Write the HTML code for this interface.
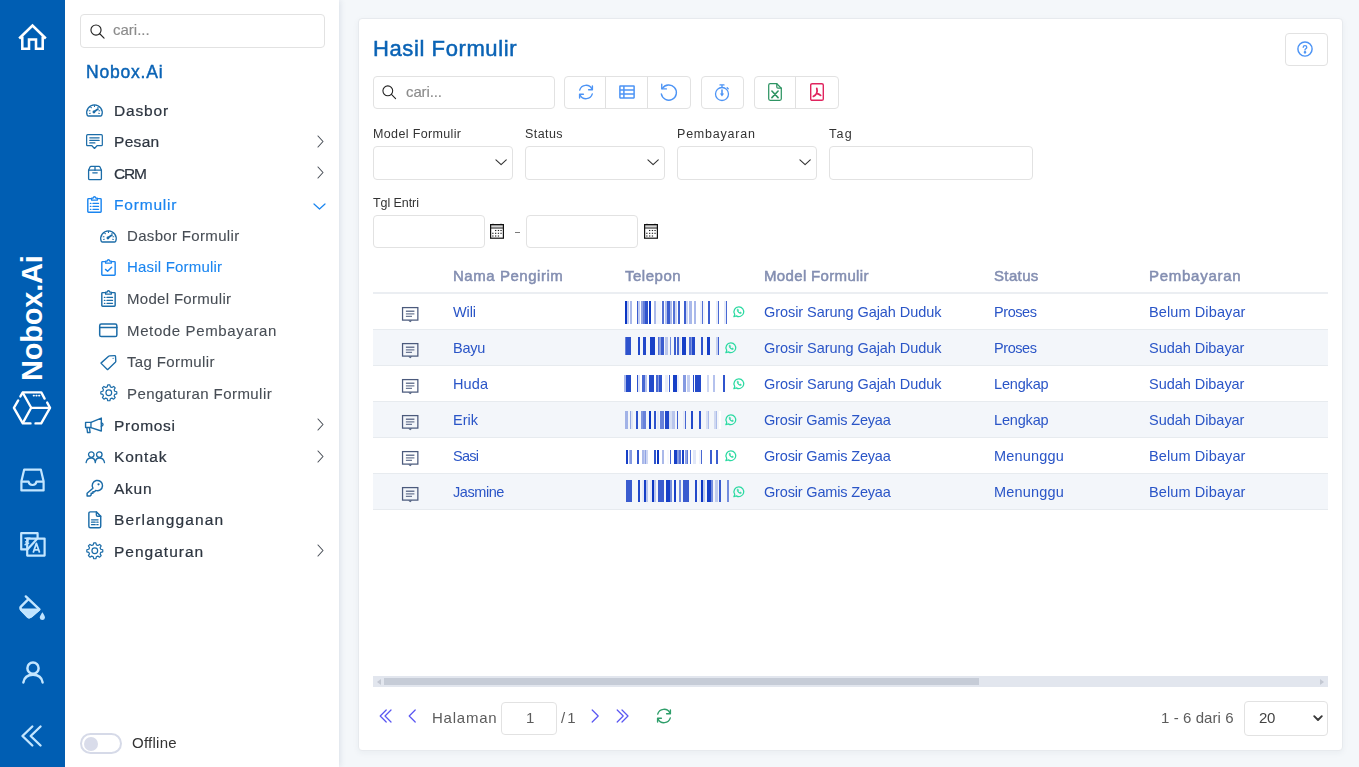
<!DOCTYPE html>
<html lang="id">
<head>
<meta charset="utf-8">
<title>Hasil Formulir - Nobox.Ai</title>
<style>
*{box-sizing:border-box;margin:0;padding:0}
html,body{width:1359px;height:767px;overflow:hidden}
body{font-family:"Liberation Sans",sans-serif;background:#f4f7fa;color:#333;position:relative;font-size:14px}
.abs{position:absolute}
svg{display:block;overflow:visible}
/* rail */
#rail{position:absolute;left:0;top:0;width:65px;height:767px;background:#005eb3}
#rail svg{position:absolute}
#brandv{position:absolute;left:0;top:0;width:0;height:0}
#brandv span{position:absolute;left:0;top:0;transform-origin:0 0;transform:translate(18px,381px) rotate(-90deg);white-space:nowrap;font-weight:bold;font-size:29px;color:#fff;line-height:1;letter-spacing:-.2px}
/* sidebar */
#side{position:absolute;left:65px;top:0;width:274px;height:767px;background:#fff;box-shadow:1px 0 6px rgba(60,80,110,.14)}
.sbox{position:absolute;left:15px;top:14px;width:245px;height:34px;border:1px solid #dcdcdc;border-radius:4px;background:#fff}
.ph{position:absolute;color:#8a8a8a;font-size:15px;line-height:1;white-space:nowrap}
#side .brand{position:absolute;left:21px;top:62px;font-size:18px;color:#0a63b5;line-height:20px;white-space:nowrap;letter-spacing:.2px}
.mi{position:absolute;left:0;width:274px;height:0}
.mi svg{position:absolute}
.mi .t{position:absolute;white-space:nowrap;line-height:20px;top:-10px;color:#2f3640}
.mi.l1 .t{left:48px;font-size:16px;letter-spacing:.35px}
.mi.l2 .t{left:62px;font-size:15px;color:#444a52;letter-spacing:.25px}
.mi.act .t{color:#1a85ee}
.chev{position:absolute;left:251px;top:-6px}
/* card */
#card{position:absolute;left:358px;top:18px;width:985px;height:733px;background:#fff;border:1px solid #e7eaee;border-radius:4px;box-shadow:0 2px 6px rgba(30,50,80,.05)}
#main .h1{position:absolute;left:373px;top:34px;font-size:22px;line-height:30px;color:#0a63b5;white-space:nowrap;letter-spacing:.15px}
.box{position:absolute;border:1px solid #e2e2e2;border-radius:4px;background:#fff}
.lbl{position:absolute;font-size:12.5px;line-height:16px;color:#333;white-space:nowrap;letter-spacing:.2px}
.box svg{position:absolute}
/* table */
.th{position:absolute;top:266px;font-size:15px;line-height:20px;color:#8792ad;font-weight:bold;white-space:nowrap}
.row{position:absolute;left:373px;width:955px;height:36px;border-bottom:1px solid #e2e6ec}
.row.alt{background:#f3f6fa}
.row span{position:absolute;top:8px;line-height:20px;font-size:15px;color:#2a52c4;white-space:nowrap}
.row svg{position:absolute}
.pg{position:absolute;font-size:15px;line-height:20px;color:#4a4a4a;white-space:nowrap}
.tx{position:absolute;white-space:nowrap;line-height:20px;will-change:transform}
</style>
</head>
<body>
<div id="rail">
<!-- home -->
<svg style="left:18px;top:23px" width="29" height="28" viewBox="0 0 29 28" fill="none" stroke="#fff" stroke-width="2.55" stroke-linejoin="miter"><path d="M1.2 15.5 L14.5 2.6 L27.8 15.5"/><path d="M4.3 13.5 V25.8 H11 V16.5 H18 V25.8 H24.7 V13.5"/></svg>
<div id="brandv"><span>Nobox.Ai</span></div>
<!-- cube logo -->
<svg style="left:12px;top:390px" width="40" height="36" viewBox="12 390 40 36" fill="none" stroke="#fff" stroke-width="2.35" stroke-linecap="round" stroke-linejoin="round"><path d="M18.2 400.4 L13.9 407.8 L22.8 423.4 H30.5"/><path d="M35.5 423.4 H41.2 L50 407.8 L47.2 402.6"/><path d="M44.6 398.6 L41.3 392.4 H22.8 L20.4 396.4"/><path d="M50 407.8 H31.2 L22.8 392.8"/><path d="M31.2 407.8 L23 422.6"/><path d="M33.6 395.6 H39.8" stroke-width="1.8" stroke-dasharray="0.4 2.3"/></svg>
<!-- inbox -->
<svg style="left:20px;top:468px" width="25" height="24" viewBox="0 0 25 24" fill="none" stroke="#c3e6ff" stroke-width="2.2" stroke-linejoin="round"><path d="M1.4 13.2 L4.2 1.6 H20.8 L23.6 13.2 V22.4 H1.4 Z"/><path d="M1.4 13.6 H8.6 C8.9 15.6 10.4 17 12.5 17 C14.6 17 16.1 15.6 16.4 13.6 H23.6"/></svg>
<!-- translate -->
<svg style="left:20px;top:532px" width="26" height="25" viewBox="0 0 26 25" fill="none" stroke="#c3e6ff" stroke-width="2.2" stroke-linejoin="round"><path d="M7.2 17.4 H1.2 V1.2 H17.6 V6.4"/><path d="M7.2 6.6 H24.6 V23.6 H7.2 Z" fill="#005eb3"/><path d="M7.4 17.4 L17.4 6.6" /><path d="M4.5 6.2 H10.5 M7.8 6.2 C8.4 9.6 7 12 4.6 13 M5 9.6 C6.5 10 8 10.6 9 11.6" stroke-width="1.5"/><path d="M13.2 20.6 L16.4 11.4 L19.6 20.6 M14.2 17.8 H18.6" stroke-width="1.7"/></svg>
<!-- bucket -->
<svg style="left:19.3px;top:595px" width="28" height="27" viewBox="0 0 28 27" fill="none" stroke="#c3e6ff" stroke-width="2.4" stroke-linejoin="round" stroke-linecap="round"><path d="M6.8 1.4 L20.4 14.4 L12.2 21.4 C11 22.4 9.6 22.4 8.6 21.4 L2 14.4 C1.2 13.4 1.2 12.4 2.2 11.4 L9.4 4.2"/><path d="M2 14.6 H20 L12.2 21.4 C11 22.4 9.6 22.4 8.6 21.4 Z" fill="#bfe3ff"/><path d="M23.4 17.2 C24.8 19.4 26 21 26 22.8 A2.7 2.7 0 0 1 20.700000000000003 22.8 C20.8 21 22 19.4 23.4 17.2 Z" fill="#bfe3ff" stroke="none"/></svg>
<!-- person -->
<svg style="left:21px;top:661px" width="24" height="23" viewBox="0 0 24 23" fill="none" stroke="#c3e6ff" stroke-width="2.5" stroke-linecap="round"><circle cx="12" cy="7.2" r="5.6"/><path d="M2.4 21.4 C3.2 16.6 7 13.8 12 13.8 C17 13.8 20.8 16.6 21.6 21.4"/></svg>
<!-- double chevron -->
<svg style="left:20.6px;top:725px" width="21" height="22" viewBox="0 0 23 24" fill="none" stroke="#c3e6ff" stroke-width="2.6" stroke-linecap="round" stroke-linejoin="round"><path d="M12.4 1.6 L1.6 12 L12.4 22.4"/><path d="M21.4 1.6 L10.6 12 L21.4 22.4"/></svg>
</div>
<div id="side"></div>
<div class="box" style="left:80px;top:14px;width:245px;height:34px"></div>
<svg class="abs" style="left:89.5px;top:23.5px" width="15" height="15" viewBox="0 0 16 16" fill="none" stroke-linecap="round" stroke-linejoin="round"><circle cx="6.4" cy="6.4" r="5.4" stroke="#222" stroke-width="1.2"/><path d="M10.4 10.4 L15 15" stroke="#222" stroke-width="1.2"/></svg>
<span class="tx " style="left:113.2px;top:20.1px;font-size:15px;color:#8b8b8b;letter-spacing:-0.01px;-webkit-text-stroke:0.15px;">cari...</span>
<span class="tx " style="left:86px;top:62.2px;font-size:17.5px;color:#0a63b5;letter-spacing:0.80px;-webkit-text-stroke:0.45px;">Nobox.Ai</span>
<svg class="abs" style="left:86.02px;top:101.92px" width="16.96" height="16.96" viewBox="0 0 16 16" fill="none" stroke-linecap="round" stroke-linejoin="round"><path d="M1.1 12.4 A7.3 7.3 0 1 1 14.9 12.4 Q14.7 13.2 13.8 13.2 H2.2 Q1.3 13.2 1.1 12.4 Z" stroke="#1b6ca8" stroke-width="1.3"/><path d="M8 3.4 V4.2 M4.5 4.8 L5 5.4 M11.5 4.8 L11.2 5.2 M3 8.2 H3.8 M13 8.2 H12.2 M3.4 10.8 L4 10.6 M12.6 10.8 L12 10.6" stroke="#1b6ca8" stroke-width="1.05"/><path d="M7.6 9.3 L11.3 6.7" stroke="#1b6ca8" stroke-width="1.7"/><circle cx="7.5" cy="9.4" r="1.35" fill="#1b6ca8"/></svg>
<span class="tx " style="left:113.6px;top:100.6px;font-size:15.5px;color:#2d3540;letter-spacing:0.85px;-webkit-text-stroke:0.22px;">Dasbor</span>
<svg class="abs" style="left:86.02px;top:133.42px" width="16.96" height="16.96" viewBox="0 0 16 16" fill="none" stroke-linecap="round" stroke-linejoin="round"><path d="M1.6 1.6 H14.4 Q15.4 1.6 15.4 2.6 V11 Q15.4 12 14.4 12 H10.4 L8 14.6 L5.6 12 H1.6 Q0.6 12 0.6 11 V2.6 Q0.6 1.6 1.6 1.6 Z" stroke="#1b6ca8" stroke-width="1.15"/><path d="M3.6 4.6 H12.4 M3.6 7 H12.4 M3.6 9.4 H8.4" stroke="#1b6ca8" stroke-width="1.2"/></svg>
<span class="tx " style="left:113.6px;top:132.1px;font-size:15.5px;color:#2d3540;letter-spacing:0.31px;-webkit-text-stroke:0.22px;">Pesan</span>
<svg class="abs" style="left:316.5px;top:134.9px" width="7" height="13" viewBox="0 0 7 13" fill="none" stroke-linecap="round" stroke-linejoin="round"><path d="M1 1 L6 6.5 L1 12" stroke="#4a5058" stroke-width="1.1"/></svg>
<svg class="abs" style="left:86.5px;top:165.4px" width="16" height="16" viewBox="0 0 16 16" fill="none" stroke-linecap="round" stroke-linejoin="round"><path d="M1.6 5.2 H14.4 V13.4 Q14.4 14.6 13.2 14.6 H2.8 Q1.6 14.6 1.6 13.4 Z" stroke="#1b6ca8" stroke-width="1.3"/><path d="M1.6 5.2 L3 2 Q3.3 1.4 4 1.4 H12 Q12.7 1.4 13 2 L14.4 5.2 M8 1.4 V5.2 M5.8 7.8 H10.2" stroke="#1b6ca8" stroke-width="1.3"/></svg>
<span class="tx " style="left:113.6px;top:163.6px;font-size:15.5px;color:#2d3540;letter-spacing:-1.16px;-webkit-text-stroke:0.22px;">CRM</span>
<svg class="abs" style="left:316.5px;top:166.4px" width="7" height="13" viewBox="0 0 7 13" fill="none" stroke-linecap="round" stroke-linejoin="round"><path d="M1 1 L6 6.5 L1 12" stroke="#4a5058" stroke-width="1.1"/></svg>
<svg class="abs" style="left:86.02px;top:195.92px" width="16.96" height="16.96" viewBox="0 0 16 16" fill="none" stroke-linecap="round" stroke-linejoin="round"><path d="M5.2 2.5 H2.4 Q1.7 2.5 1.7 3.2 V14.6 Q1.7 15.3 2.4 15.3 H13.6 Q14.3 15.3 14.3 14.6 V3.2 Q14.3 2.5 13.6 2.5 H10.8" stroke="#1a85f0" stroke-width="1.35"/><path d="M5.3 3.9 V2.1 H6.7 Q7 0.7 8 0.7 Q9 0.7 9.3 2.1 H10.7 V3.9 Z" stroke="#1a85f0" stroke-width="1.2"/><path d="M6.6 7 H11.8 M6.6 9.8 H11.8 M6.6 12.6 H11.8" stroke="#1a85f0" stroke-width="1.25"/><path d="M4.2 7 H4.6 M4.2 9.8 H4.6 M4.2 12.6 H4.6" stroke="#1a85f0" stroke-width="1.3"/></svg>
<span class="tx " style="left:113.6px;top:195.1px;font-size:15.5px;color:#1a85f0;letter-spacing:0.81px;-webkit-text-stroke:0.22px;">Formulir</span>
<svg class="abs" style="left:313px;top:202.6px" width="13" height="7" viewBox="0 0 13 7" fill="none" stroke-linecap="round" stroke-linejoin="round"><path d="M1 1 L6.5 6 L12 1" stroke="#1a85f0" stroke-width="1.2"/></svg>
<svg class="abs" style="left:99.92px;top:227.72px" width="16.96" height="16.96" viewBox="0 0 16 16" fill="none" stroke-linecap="round" stroke-linejoin="round"><path d="M1.1 12.4 A7.3 7.3 0 1 1 14.9 12.4 Q14.7 13.2 13.8 13.2 H2.2 Q1.3 13.2 1.1 12.4 Z" stroke="#1b6ca8" stroke-width="1.3"/><path d="M8 3.4 V4.2 M4.5 4.8 L5 5.4 M11.5 4.8 L11.2 5.2 M3 8.2 H3.8 M13 8.2 H12.2 M3.4 10.8 L4 10.6 M12.6 10.8 L12 10.6" stroke="#1b6ca8" stroke-width="1.05"/><path d="M7.6 9.3 L11.3 6.7" stroke="#1b6ca8" stroke-width="1.7"/><circle cx="7.5" cy="9.4" r="1.35" fill="#1b6ca8"/></svg>
<span class="tx " style="left:127.4px;top:226px;font-size:15px;color:#474d55;letter-spacing:0.33px;-webkit-text-stroke:0.1px;">Dasbor Formulir</span>
<svg class="abs" style="left:99.92px;top:258.82px" width="16.96" height="16.96" viewBox="0 0 16 16" fill="none" stroke-linecap="round" stroke-linejoin="round"><path d="M5.2 2.5 H2.4 Q1.7 2.5 1.7 3.2 V14.6 Q1.7 15.3 2.4 15.3 H13.6 Q14.3 15.3 14.3 14.6 V3.2 Q14.3 2.5 13.6 2.5 H10.8" stroke="#1a85f0" stroke-width="1.35"/><path d="M5.3 3.9 V2.1 H6.7 Q7 0.7 8 0.7 Q9 0.7 9.3 2.1 H10.7 V3.9 Z" stroke="#1a85f0" stroke-width="1.2"/><path d="M5.2 9.8 L7.2 11.6 L11 7.8" stroke="#1a85f0" stroke-width="1.35"/></svg>
<span class="tx " style="left:127.4px;top:256.7px;font-size:15px;color:#1a85f0;letter-spacing:0.19px;-webkit-text-stroke:0.1px;">Hasil Formulir</span>
<svg class="abs" style="left:99.92px;top:290.22px" width="16.96" height="16.96" viewBox="0 0 16 16" fill="none" stroke-linecap="round" stroke-linejoin="round"><path d="M5.2 2.5 H2.4 Q1.7 2.5 1.7 3.2 V14.6 Q1.7 15.3 2.4 15.3 H13.6 Q14.3 15.3 14.3 14.6 V3.2 Q14.3 2.5 13.6 2.5 H10.8" stroke="#1b6ca8" stroke-width="1.35"/><path d="M5.3 3.9 V2.1 H6.7 Q7 0.7 8 0.7 Q9 0.7 9.3 2.1 H10.7 V3.9 Z" stroke="#1b6ca8" stroke-width="1.2"/><path d="M6.6 7 H11.8 M6.6 9.8 H11.8 M6.6 12.6 H11.8" stroke="#1b6ca8" stroke-width="1.25"/><path d="M4.2 7 H4.6 M4.2 9.8 H4.6 M4.2 12.6 H4.6" stroke="#1b6ca8" stroke-width="1.3"/></svg>
<span class="tx " style="left:127.4px;top:289px;font-size:15px;color:#474d55;letter-spacing:0.31px;-webkit-text-stroke:0.1px;">Model Formulir</span>
<svg class="abs" style="left:99.12px;top:321.42px" width="18.56" height="18.56" viewBox="0 0 16 16" fill="none" stroke-linecap="round" stroke-linejoin="round"><rect x="0.6" y="2.6" width="14.8" height="10.8" rx="1.4" stroke="#1b6ca8" stroke-width="1.3"/><path d="M0.6 5.6 H15.4" stroke="#1b6ca8" stroke-width="1.3"/></svg>
<span class="tx " style="left:127.4px;top:320.5px;font-size:15px;color:#474d55;letter-spacing:0.63px;-webkit-text-stroke:0.1px;">Metode Pembayaran</span>
<svg class="abs" style="left:100px;top:353.8px" width="16.8" height="16.8" viewBox="0 0 16 16" fill="none" stroke-linecap="round" stroke-linejoin="round"><path d="M0.9 8.7 L8.2 2.2 Q8.6 1.9 9.2 1.85 L14 1.5 Q14.7 1.5 14.75 2.2 L15.05 6.8 Q15.05 7.4 14.6 7.9 L7.2 14.9 Z" stroke="#1b6ca8" stroke-width="1.3"/><circle cx="12.5" cy="4.1" r=".6" fill="#1b6ca8"/></svg>
<span class="tx " style="left:127.4px;top:352px;font-size:15px;color:#474d55;letter-spacing:0.37px;-webkit-text-stroke:0.1px;">Tag Formulir</span>
<svg class="abs" style="left:99.6px;top:384.4px" width="17.6" height="17.6" viewBox="0 0 16 16" fill="none" stroke-linecap="round" stroke-linejoin="round"><path d="M7.03 0.76 L8.97 0.76 L9.44 2.59 L10.81 3.16 L12.43 2.20 L13.80 3.57 L12.84 5.19 L13.41 6.56 L15.24 7.03 L15.24 8.97 L13.41 9.44 L12.84 10.81 L13.80 12.43 L12.43 13.80 L10.81 12.84 L9.44 13.41 L8.97 15.24 L7.03 15.24 L6.56 13.41 L5.19 12.84 L3.57 13.80 L2.20 12.43 L3.16 10.81 L2.59 9.44 L0.76 8.97 L0.76 7.03 L2.59 6.56 L3.16 5.19 L2.20 3.57 L3.57 2.20 L5.19 3.16 L6.56 2.59 Z" stroke="#1b6ca8" stroke-width="1.1" stroke-linejoin="round"/><circle cx="8" cy="8" r="2.6" stroke="#1b6ca8" stroke-width="1.1"/></svg>
<span class="tx " style="left:127.4px;top:383.5px;font-size:15px;color:#474d55;letter-spacing:0.44px;-webkit-text-stroke:0.1px;">Pengaturan Formulir</span>
<svg class="abs" style="left:85.86px;top:417.16px" width="17.28" height="17.28" viewBox="0 0 16 16" fill="none" stroke-linecap="round" stroke-linejoin="round"><path d="M-0.4 5 H4.6 L14.2 1 V13 L4.6 9.8 H-0.4 Z" stroke="#1b6ca8" stroke-width="1.3"/><path d="M4.6 5 V9.8 M0.8 9.8 L1.4 14.4 H3.8 L3.2 9.8 M14.2 5.4 Q15.8 5.8 15.8 7 Q15.8 8.2 14.2 8.6" stroke="#1b6ca8" stroke-width="1.25"/></svg>
<span class="tx " style="left:113.6px;top:415.6px;font-size:15.5px;color:#2d3540;letter-spacing:0.69px;-webkit-text-stroke:0.22px;">Promosi</span>
<svg class="abs" style="left:316.5px;top:418.4px" width="7" height="13" viewBox="0 0 7 13" fill="none" stroke-linecap="round" stroke-linejoin="round"><path d="M1 1 L6 6.5 L1 12" stroke="#4a5058" stroke-width="1.1"/></svg>
<svg class="abs" style="left:86.5px;top:451.1px" width="16" height="16" viewBox="0 0 16 16" fill="none" stroke-linecap="round" stroke-linejoin="round"><circle cx="4.3" cy="3.6" r="2.75" stroke="#1b6ca8" stroke-width="1.3"/><circle cx="12.3" cy="3.6" r="2.75" stroke="#1b6ca8" stroke-width="1.3"/><path d="M-0.9 11.6 Q-0.2 7 4.3 7 Q8 7 8.3 11.6 M8.3 11.6 Q8.6 7 12.3 7 Q16.8 7 17.5 11.6" stroke="#1b6ca8" stroke-width="1.3"/></svg>
<span class="tx " style="left:113.6px;top:447.1px;font-size:15.5px;color:#2d3540;letter-spacing:0.83px;-webkit-text-stroke:0.22px;">Kontak</span>
<svg class="abs" style="left:316.5px;top:449.9px" width="7" height="13" viewBox="0 0 7 13" fill="none" stroke-linecap="round" stroke-linejoin="round"><path d="M1 1 L6 6.5 L1 12" stroke="#4a5058" stroke-width="1.1"/></svg>
<svg class="abs" style="left:85.54px;top:479.44px" width="17.92" height="17.92" viewBox="0 0 16 16" fill="none" stroke-linecap="round" stroke-linejoin="round"><path d="M6.2 8.2 A4.6 4.6 0 1 1 8.6 10.2 L7.6 11.4 H6.2 V12.8 H4.6 V14.2 L3.6 15.2 H1 V12.8 Z" stroke="#1b6ca8" stroke-width="1.3"/><circle cx="11.2" cy="4.8" r="1" fill="#1b6ca8"/></svg>
<span class="tx " style="left:113.6px;top:478.6px;font-size:15.5px;color:#2d3540;letter-spacing:0.75px;-webkit-text-stroke:0.22px;">Akun</span>
<svg class="abs" style="left:85.7px;top:511.1px" width="17.6" height="17.6" viewBox="0 0 16 16" fill="none" stroke-linecap="round" stroke-linejoin="round"><path d="M9.4 0.8 H4 Q2.6 0.8 2.6 2.2 V13.8 Q2.6 15.2 4 15.2 H12 Q13.4 15.2 13.4 13.8 V4.8 Z" stroke="#1b6ca8" stroke-width="1.3"/><path d="M9.4 0.8 V3.6 Q9.4 4.8 10.6 4.8 H13.4" stroke="#1b6ca8" stroke-width="1.2"/><path d="M5 8 H11 M5 10.2 H8.4 M9.8 10.2 H11 M5 12.4 H8.4 M9.8 12.4 H11" stroke="#1b6ca8" stroke-width="1.1"/></svg>
<span class="tx " style="left:113.6px;top:510.1px;font-size:15.5px;color:#2d3540;letter-spacing:1.15px;-webkit-text-stroke:0.22px;">Berlangganan</span>
<svg class="abs" style="left:85.7px;top:542.1px" width="17.6" height="17.6" viewBox="0 0 16 16" fill="none" stroke-linecap="round" stroke-linejoin="round"><path d="M7.03 0.76 L8.97 0.76 L9.44 2.59 L10.81 3.16 L12.43 2.20 L13.80 3.57 L12.84 5.19 L13.41 6.56 L15.24 7.03 L15.24 8.97 L13.41 9.44 L12.84 10.81 L13.80 12.43 L12.43 13.80 L10.81 12.84 L9.44 13.41 L8.97 15.24 L7.03 15.24 L6.56 13.41 L5.19 12.84 L3.57 13.80 L2.20 12.43 L3.16 10.81 L2.59 9.44 L0.76 8.97 L0.76 7.03 L2.59 6.56 L3.16 5.19 L2.20 3.57 L3.57 2.20 L5.19 3.16 L6.56 2.59 Z" stroke="#1b6ca8" stroke-width="1.1" stroke-linejoin="round"/><circle cx="8" cy="8" r="2.6" stroke="#1b6ca8" stroke-width="1.1"/></svg>
<span class="tx " style="left:113.6px;top:541.6px;font-size:15.5px;color:#2d3540;letter-spacing:1.00px;-webkit-text-stroke:0.22px;">Pengaturan</span>
<svg class="abs" style="left:316.5px;top:544.4px" width="7" height="13" viewBox="0 0 7 13" fill="none" stroke-linecap="round" stroke-linejoin="round"><path d="M1 1 L6 6.5 L1 12" stroke="#4a5058" stroke-width="1.1"/></svg>
<div class="abs" style="left:80px;top:733px;width:42px;height:21px;border:2px solid #d6dae8;border-radius:11px;background:#fff"></div>
<div class="abs" style="left:84px;top:737px;width:14px;height:14px;border-radius:50%;background:#d9dcea"></div>
<span class="tx " style="left:132.4px;top:733.2px;font-size:15px;color:#333;letter-spacing:0.25px;">Offline</span>
<div id="main"><div id="card"></div>
<span class="tx " style="left:372.6px;top:38.5px;font-size:22px;color:#0a63b5;letter-spacing:0.60px;-webkit-text-stroke:0.5px;">Hasil Formulir</span>
<div class="box" style="left:1285px;top:33px;width:43px;height:33px"></div>
<svg class="abs" style="left:1297.4px;top:40.8px" width="16" height="16" viewBox="0 0 16 16" fill="none" stroke="#4d94f5" stroke-width="1.45" stroke-linecap="round"><circle cx="8" cy="8" r="7.1"/><path d="M6.2 6.3 Q6.2 4.7 8 4.7 Q9.8 4.7 9.8 6.2 Q9.8 7.2 8.8 7.7 Q8 8.2 8 9.1" stroke-width="1.3"/><circle cx="8" cy="11.3" r=".6" fill="#4d94f5"/></svg>
<div class="box" style="left:373px;top:76px;width:182px;height:33px"></div>
<svg class="abs" style="left:382px;top:84.5px" width="14.5" height="14.5" viewBox="0 0 16 16" fill="none" stroke-linecap="round" stroke-linejoin="round"><circle cx="6.4" cy="6.4" r="5.4" stroke="#222" stroke-width="1.2"/><path d="M10.4 10.4 L15 15" stroke="#222" stroke-width="1.2"/></svg>
<span class="tx " style="left:406px;top:82.3px;font-size:15px;color:#8b8b8b;letter-spacing:-0.11px;-webkit-text-stroke:0.15px;">cari...</span>
<div class="box" style="left:564px;top:76px;width:127px;height:33px"></div>
<div class="abs" style="left:605px;top:77px;width:1px;height:31px;background:#e0e0e0"></div>
<div class="abs" style="left:647px;top:77px;width:1px;height:31px;background:#e0e0e0"></div>
<div class="box" style="left:701px;top:76px;width:43px;height:33px"></div>
<div class="box" style="left:754px;top:76px;width:85px;height:33px"></div>
<div class="abs" style="left:795px;top:77px;width:1px;height:31px;background:#e0e0e0"></div>
<svg class="abs" style="left:577.5px;top:84.1px" width="16" height="16" viewBox="0 0 16 16" fill="none" stroke-linecap="round" stroke-linejoin="round"><path d="M1.7 6.1 A6.6 6.6 0 0 1 13.9 4.9" stroke="#4d94f5" stroke-width="1.4"/><path d="M14.4 1.9 V5.7 H10.6" stroke="#4d94f5" stroke-width="1.4"/><path d="M14.3 9.9 A6.6 6.6 0 0 1 2.1 11.1" stroke="#4d94f5" stroke-width="1.4"/><path d="M1.6 14.1 V10.3 H5.4" stroke="#4d94f5" stroke-width="1.4"/></svg>
<svg class="abs" style="left:619px;top:85.2px" width="16" height="13.8" viewBox="0 0 16 13.8" fill="none" stroke="#4d94f5" stroke-width="1.5"><rect x=".9" y=".9" width="14.2" height="12" rx=".3"/><path d="M.9 4.9 H15.1 M.9 8.9 H15.1 M4.9 .9 V12.9"/></svg>
<svg class="abs" style="left:659.4px;top:82.8px" width="19" height="19" viewBox="0 0 18 18" fill="none" stroke="#4d94f5" stroke-width="1.3" stroke-linecap="round" stroke-linejoin="round"><path d="M3.2 5.2 A7.2 7.2 0 1 1 2.2 10.4"/><path d="M2.6 1.2 V5.6 H7"/></svg>
<svg class="abs" style="left:714px;top:83.5px" width="16" height="17" viewBox="0 0 16 17" fill="none" stroke="#4d94f5" stroke-width="1.3" stroke-linecap="round"><circle cx="8" cy="10" r="6.5"/><path d="M6 .9 H10 M8 .9 V3.4 M13.2 3.8 L14.2 4.8"/><path d="M8 6 V10.4" stroke-width="1.6"/><path d="M5.9 9.6 L8 12.6 L10.1 9.6 Z" fill="#4d94f5" stroke="none"/></svg>
<svg class="abs" style="left:768px;top:83px" width="14" height="18" viewBox="0 0 14 18" fill="none" stroke="#2e9463" stroke-width="1.25" stroke-linejoin="round" stroke-linecap="round"><path d="M8.8 .7 H2.2 Q.7 .7 .7 2.2 V15.8 Q.7 17.3 2.2 17.3 H11.8 Q13.3 17.3 13.3 15.8 V5.2 Z"/><path d="M8.8 .7 V4 Q8.8 5.2 10 5.2 H13.3"/><path d="M3.9 8 L10.1 14.6 M10.1 8 L3.9 14.6" stroke-width="1.6"/></svg>
<svg class="abs" style="left:810px;top:83px" width="14" height="18" viewBox="0 0 14 18" fill="none" stroke="#e0245e" stroke-width="1.4" stroke-linejoin="round" stroke-linecap="round"><rect x=".7" y=".7" width="12.6" height="16.6" rx="1.4"/><path d="M6.8 5.4 Q7.6 8.2 6.6 10.4 Q5.4 12.6 3.4 13.4 M6.6 10.4 Q8.8 11 10.6 12.4" stroke-width="1.8"/></svg>
<span class="tx " style="left:372.6px;top:124.2px;font-size:12.5px;color:#333;letter-spacing:0.36px;">Model Formulir</span>
<span class="tx " style="left:524.6px;top:124.2px;font-size:12.5px;color:#333;letter-spacing:0.43px;">Status</span>
<span class="tx " style="left:676.6px;top:124.2px;font-size:12.5px;color:#333;letter-spacing:0.79px;">Pembayaran</span>
<span class="tx " style="left:828.6px;top:124.2px;font-size:12.5px;color:#333;letter-spacing:1.22px;">Tag</span>
<div class="box" style="left:373px;top:146px;width:140px;height:34px"></div>
<svg class="abs" style="left:494.7px;top:159px" width="12.2" height="6.6" viewBox="0 0 13 7" fill="none" stroke-linecap="round" stroke-linejoin="round"><path d="M1 1 L6.5 6 L12 1" stroke="#333" stroke-width="1.2"/></svg>
<div class="box" style="left:525px;top:146px;width:140px;height:34px"></div>
<svg class="abs" style="left:646.7px;top:159px" width="12.2" height="6.6" viewBox="0 0 13 7" fill="none" stroke-linecap="round" stroke-linejoin="round"><path d="M1 1 L6.5 6 L12 1" stroke="#333" stroke-width="1.2"/></svg>
<div class="box" style="left:677px;top:146px;width:140px;height:34px"></div>
<svg class="abs" style="left:798.7px;top:159px" width="12.2" height="6.6" viewBox="0 0 13 7" fill="none" stroke-linecap="round" stroke-linejoin="round"><path d="M1 1 L6.5 6 L12 1" stroke="#333" stroke-width="1.2"/></svg>
<div class="box" style="left:829px;top:146px;width:204px;height:34px"></div>
<span class="tx " style="left:372.6px;top:192.8px;font-size:12.5px;color:#333;letter-spacing:-0.07px;">Tgl Entri</span>
<div class="box" style="left:373px;top:215px;width:112px;height:33px"></div>
<div class="box" style="left:526px;top:215px;width:112px;height:33px"></div>
<svg class="abs" style="left:490px;top:223px" width="14" height="16" viewBox="0 0 14 16" fill="none"><rect x=".6" y="1.6" width="12.8" height="13.6" stroke="#111" stroke-width="1.2"/><path d="M.6 5 H13.4" stroke="#111" stroke-width="1"/><path d="M.6 2.9 H13.4" stroke="#111" stroke-width="1" stroke-opacity=".45"/><path d="M3 .7 V1.8 M11 .7 V1.8" stroke="#111" stroke-width="1.4" stroke-opacity=".7"/><rect x="5.0" y="6.95" width="1.3" height="1.1" fill="#222"/><rect x="7.8" y="6.95" width="1.3" height="1.1" fill="#222"/><rect x="10.4" y="6.95" width="1.3" height="1.1" fill="#222"/><rect x="2.2" y="9.75" width="1.3" height="1.1" fill="#222"/><rect x="5.0" y="9.75" width="1.3" height="1.1" fill="#222"/><rect x="7.8" y="9.75" width="1.3" height="1.1" fill="#222"/><rect x="10.4" y="9.75" width="1.3" height="1.1" fill="#222"/><rect x="2.2" y="12.45" width="1.3" height="1.1" fill="#222"/><rect x="5.0" y="12.45" width="1.3" height="1.1" fill="#222"/><rect x="7.8" y="12.45" width="1.3" height="1.1" fill="#222"/></svg>
<svg class="abs" style="left:643.8px;top:223px" width="14" height="16" viewBox="0 0 14 16" fill="none"><rect x=".6" y="1.6" width="12.8" height="13.6" stroke="#111" stroke-width="1.2"/><path d="M.6 5 H13.4" stroke="#111" stroke-width="1"/><path d="M.6 2.9 H13.4" stroke="#111" stroke-width="1" stroke-opacity=".45"/><path d="M3 .7 V1.8 M11 .7 V1.8" stroke="#111" stroke-width="1.4" stroke-opacity=".7"/><rect x="5.0" y="6.95" width="1.3" height="1.1" fill="#222"/><rect x="7.8" y="6.95" width="1.3" height="1.1" fill="#222"/><rect x="10.4" y="6.95" width="1.3" height="1.1" fill="#222"/><rect x="2.2" y="9.75" width="1.3" height="1.1" fill="#222"/><rect x="5.0" y="9.75" width="1.3" height="1.1" fill="#222"/><rect x="7.8" y="9.75" width="1.3" height="1.1" fill="#222"/><rect x="10.4" y="9.75" width="1.3" height="1.1" fill="#222"/><rect x="2.2" y="12.45" width="1.3" height="1.1" fill="#222"/><rect x="5.0" y="12.45" width="1.3" height="1.1" fill="#222"/><rect x="7.8" y="12.45" width="1.3" height="1.1" fill="#222"/></svg>
<div class="abs" style="left:514.7px;top:231.5px;width:5.8px;height:1.3px;background:#7a7a7a"></div>
<span class="tx " style="left:453px;top:266px;font-size:15px;color:#838eb1;letter-spacing:0.54px;-webkit-text-stroke:0.5px;">Nama Pengirim</span>
<span class="tx " style="left:625px;top:266px;font-size:15px;color:#838eb1;letter-spacing:0.51px;-webkit-text-stroke:0.5px;">Telepon</span>
<span class="tx " style="left:764px;top:266px;font-size:15px;color:#838eb1;letter-spacing:0.34px;-webkit-text-stroke:0.5px;">Model Formulir</span>
<span class="tx " style="left:994.4px;top:266px;font-size:15px;color:#838eb1;letter-spacing:0.37px;-webkit-text-stroke:0.5px;">Status</span>
<span class="tx " style="left:1148.8px;top:266px;font-size:15px;color:#838eb1;letter-spacing:0.73px;-webkit-text-stroke:0.5px;">Pembayaran</span>
<div class="abs" style="left:373px;top:291.8px;width:955px;height:2.2px;background:#ebeef2"></div>
<div class="abs" style="left:373px;top:294px;width:955px;height:36px;border-bottom:1px solid #e7ebef"></div>
<svg class="abs" style="left:401px;top:306px" width="18" height="17" viewBox="0 0 18 17" fill="none"><rect x="1.55" y="1.6" width="15.3" height="12.5" stroke="#4b5a7c" stroke-width="1.25"/><path d="M7.2 14.5 L9.2 16.3 L11.2 14.5 Z" fill="#4b5a7c"/><path d="M4.9 5.2 H13.4 M4.9 7.8 H13.4 M4.9 10.4 H11" stroke="#4b5a7c" stroke-width="1.35" stroke-opacity=".8"/></svg>
<span class="tx " style="left:452.8px;top:302.3px;font-size:14.5px;color:#2a55c7;letter-spacing:-0.12px;">Wili</span>
<span class="tx " style="left:764px;top:302.3px;font-size:14.5px;color:#2a55c7;letter-spacing:-0.06px;">Grosir Sarung Gajah Duduk</span>
<span class="tx " style="left:994.4px;top:302.3px;font-size:14.5px;color:#2a55c7;letter-spacing:-0.43px;">Proses</span>
<span class="tx " style="left:1148.8px;top:302.3px;font-size:14.5px;color:#2a55c7;letter-spacing:0.11px;">Belum Dibayar</span>
<svg class="abs" style="left:0;top:0" width="1359" height="767" viewBox="0 0 1359 767" shape-rendering="crispEdges"><rect x="624.97" y="301" width="2.20" height="23" fill="#0b36c4" fill-opacity="1"/><rect x="627.17" y="301" width="1.91" height="23" fill="#0b36c4" fill-opacity="0.25"/><rect x="630.04" y="301" width="2.10" height="23" fill="#0b36c4" fill-opacity="0.35"/><rect x="637.03" y="301" width="1.15" height="23" fill="#0b36c4" fill-opacity="0.8"/><rect x="638.18" y="301" width="1.72" height="23" fill="#0b36c4" fill-opacity="0.25"/><rect x="641.04" y="301" width="1.91" height="23" fill="#0b36c4" fill-opacity="0.45"/><rect x="642.96" y="301" width="2.10" height="23" fill="#0b36c4" fill-opacity="0.65"/><rect x="645.06" y="301" width="2.87" height="23" fill="#0b36c4" fill-opacity="0.85"/><rect x="648.98" y="301" width="2.30" height="23" fill="#0b36c4" fill-opacity="1"/><rect x="653.96" y="301" width="2.20" height="23" fill="#0b36c4" fill-opacity="0.35"/><rect x="656.16" y="301" width="4.97" height="23" fill="#0b36c4" fill-opacity="0.04"/><rect x="662.09" y="301" width="1.91" height="23" fill="#0b36c4" fill-opacity="0.7"/><rect x="664.96" y="301" width="1.91" height="23" fill="#0b36c4" fill-opacity="0.3"/><rect x="666.87" y="301" width="3.35" height="23" fill="#0b36c4" fill-opacity="0.8"/><rect x="670.22" y="301" width="1.91" height="23" fill="#0b36c4" fill-opacity="0.35"/><rect x="673.09" y="301" width="2.20" height="23" fill="#0b36c4" fill-opacity="0.7"/><rect x="675.29" y="301" width="2.10" height="23" fill="#0b36c4" fill-opacity="0.2"/><rect x="678.07" y="301" width="1.91" height="23" fill="#0b36c4" fill-opacity="0.8"/><rect x="683.90" y="301" width="2.30" height="23" fill="#0b36c4" fill-opacity="0.8"/><rect x="686.20" y="301" width="1.72" height="23" fill="#0b36c4" fill-opacity="0.2"/><rect x="689.07" y="301" width="2.87" height="23" fill="#0b36c4" fill-opacity="0.35"/><rect x="694.14" y="301" width="1.91" height="23" fill="#0b36c4" fill-opacity="0.35"/><rect x="700.16" y="301" width="1.63" height="23" fill="#0b36c4" fill-opacity="0.08"/><rect x="701.79" y="301" width="1.24" height="23" fill="#0b36c4" fill-opacity="0.7"/><rect x="703.03" y="301" width="1.63" height="23" fill="#0b36c4" fill-opacity="0.05"/><rect x="708.01" y="301" width="2.10" height="23" fill="#0b36c4" fill-opacity="0.8"/><rect x="716.14" y="301" width="1.63" height="23" fill="#0b36c4" fill-opacity="0.1"/><rect x="717.76" y="301" width="1.24" height="23" fill="#0b36c4" fill-opacity="0.75"/><rect x="724.08" y="301" width="1.91" height="23" fill="#0b36c4" fill-opacity="0.1"/><rect x="725.99" y="301" width="0.96" height="23" fill="#0b36c4" fill-opacity="0.75"/></svg>
<svg class="abs" style="left:733px;top:306.2px" width="11.6" height="11.6" viewBox="0 0 16 16" fill="none" stroke="#2cdaa2" stroke-linecap="round" stroke-linejoin="round"><path d="M8.2 1.2 A6.7 6.7 0 1 1 4.6 13.6 L1.2 14.8 L2.4 11.6 A6.7 6.7 0 0 1 8.2 1.2 Z" stroke-width="1.7"/><path d="M5.8 4.8 Q5.4 7 7.2 8.8 Q9 10.6 11.2 10.2 L11.4 9 L9.8 8.2 L9 9 Q7.6 8.4 7 7 L7.8 6.2 L7 4.6 Z" fill="#2cdaa2" stroke-width=".8"/></svg>
<div class="abs" style="left:373px;top:330px;width:955px;height:36px;background:#f3f6fa;border-bottom:1px solid #e7ebef"></div>
<svg class="abs" style="left:401px;top:342px" width="18" height="17" viewBox="0 0 18 17" fill="none"><rect x="1.55" y="1.6" width="15.3" height="12.5" stroke="#4b5a7c" stroke-width="1.25"/><path d="M7.2 14.5 L9.2 16.3 L11.2 14.5 Z" fill="#4b5a7c"/><path d="M4.9 5.2 H13.4 M4.9 7.8 H13.4 M4.9 10.4 H11" stroke="#4b5a7c" stroke-width="1.35" stroke-opacity=".8"/></svg>
<span class="tx " style="left:452.8px;top:338.3px;font-size:14.5px;color:#2a55c7;letter-spacing:-0.22px;">Bayu</span>
<span class="tx " style="left:764px;top:338.3px;font-size:14.5px;color:#2a55c7;letter-spacing:-0.06px;">Grosir Sarung Gajah Duduk</span>
<span class="tx " style="left:994.4px;top:338.3px;font-size:14.5px;color:#2a55c7;letter-spacing:-0.43px;">Proses</span>
<span class="tx " style="left:1148.8px;top:338.3px;font-size:14.5px;color:#2a55c7;letter-spacing:-0.04px;">Sudah Dibayar</span>
<svg class="abs" style="left:0;top:0" width="1359" height="767" viewBox="0 0 1359 767" shape-rendering="crispEdges"><rect x="625.26" y="337" width="0.96" height="18" fill="#0b36c4" fill-opacity="0.6"/><rect x="626.22" y="337" width="4.78" height="18" fill="#0b36c4" fill-opacity="0.85"/><rect x="637.70" y="337" width="2.39" height="18" fill="#0b36c4" fill-opacity="0.9"/><rect x="642.96" y="337" width="3.06" height="18" fill="#0b36c4" fill-opacity="0.9"/><rect x="649.94" y="337" width="4.97" height="18" fill="#0b36c4" fill-opacity="0.95"/><rect x="657.98" y="337" width="1.24" height="18" fill="#0b36c4" fill-opacity="0.7"/><rect x="659.22" y="337" width="1.72" height="18" fill="#0b36c4" fill-opacity="0.45"/><rect x="660.94" y="337" width="3.06" height="18" fill="#0b36c4" fill-opacity="0.8"/><rect x="665.15" y="337" width="2.87" height="18" fill="#0b36c4" fill-opacity="0.25"/><rect x="669.93" y="337" width="1.24" height="18" fill="#0b36c4" fill-opacity="0.55"/><rect x="673.86" y="337" width="2.10" height="18" fill="#0b36c4" fill-opacity="0.8"/><rect x="676.92" y="337" width="2.10" height="18" fill="#0b36c4" fill-opacity="0.75"/><rect x="679.02" y="337" width="2.20" height="18" fill="#0b36c4" fill-opacity="0.08"/><rect x="681.99" y="337" width="4.02" height="18" fill="#0b36c4" fill-opacity="0.95"/><rect x="688.87" y="337" width="2.10" height="18" fill="#0b36c4" fill-opacity="0.7"/><rect x="690.98" y="337" width="0.96" height="18" fill="#0b36c4" fill-opacity="0.5"/><rect x="691.94" y="337" width="2.97" height="18" fill="#0b36c4" fill-opacity="0.9"/><rect x="700.83" y="337" width="2.20" height="18" fill="#0b36c4" fill-opacity="0.85"/><rect x="706.86" y="337" width="3.06" height="18" fill="#0b36c4" fill-opacity="0.95"/><rect x="715.95" y="337" width="1.82" height="18" fill="#0b36c4" fill-opacity="0.2"/><rect x="717.76" y="337" width="1.24" height="18" fill="#0b36c4" fill-opacity="0.8"/></svg>
<svg class="abs" style="left:725px;top:342.2px" width="11.6" height="11.6" viewBox="0 0 16 16" fill="none" stroke="#2cdaa2" stroke-linecap="round" stroke-linejoin="round"><path d="M8.2 1.2 A6.7 6.7 0 1 1 4.6 13.6 L1.2 14.8 L2.4 11.6 A6.7 6.7 0 0 1 8.2 1.2 Z" stroke-width="1.7"/><path d="M5.8 4.8 Q5.4 7 7.2 8.8 Q9 10.6 11.2 10.2 L11.4 9 L9.8 8.2 L9 9 Q7.6 8.4 7 7 L7.8 6.2 L7 4.6 Z" fill="#2cdaa2" stroke-width=".8"/></svg>
<div class="abs" style="left:373px;top:366px;width:955px;height:36px;border-bottom:1px solid #e7ebef"></div>
<svg class="abs" style="left:401px;top:378px" width="18" height="17" viewBox="0 0 18 17" fill="none"><rect x="1.55" y="1.6" width="15.3" height="12.5" stroke="#4b5a7c" stroke-width="1.25"/><path d="M7.2 14.5 L9.2 16.3 L11.2 14.5 Z" fill="#4b5a7c"/><path d="M4.9 5.2 H13.4 M4.9 7.8 H13.4 M4.9 10.4 H11" stroke="#4b5a7c" stroke-width="1.35" stroke-opacity=".8"/></svg>
<span class="tx " style="left:452.8px;top:374.3px;font-size:14.5px;color:#2a55c7;letter-spacing:0.11px;">Huda</span>
<span class="tx " style="left:764px;top:374.3px;font-size:14.5px;color:#2a55c7;letter-spacing:-0.06px;">Grosir Sarung Gajah Duduk</span>
<span class="tx " style="left:994.4px;top:374.3px;font-size:14.5px;color:#2a55c7;letter-spacing:-0.17px;">Lengkap</span>
<span class="tx " style="left:1148.8px;top:374.3px;font-size:14.5px;color:#2a55c7;letter-spacing:-0.04px;">Sudah Dibayar</span>
<svg class="abs" style="left:0;top:0" width="1359" height="767" viewBox="0 0 1359 767" shape-rendering="crispEdges"><rect x="624.02" y="375" width="1.91" height="17" fill="#0b36c4" fill-opacity="0.35"/><rect x="625.93" y="375" width="4.88" height="17" fill="#0b36c4" fill-opacity="0.9"/><rect x="637.03" y="375" width="1.15" height="17" fill="#0b36c4" fill-opacity="0.85"/><rect x="638.18" y="375" width="1.72" height="17" fill="#0b36c4" fill-opacity="0.12"/><rect x="642.00" y="375" width="3.06" height="17" fill="#0b36c4" fill-opacity="0.75"/><rect x="645.06" y="375" width="1.91" height="17" fill="#0b36c4" fill-opacity="0.3"/><rect x="648.98" y="375" width="4.97" height="17" fill="#0b36c4" fill-opacity="0.9"/><rect x="656.06" y="375" width="1.91" height="17" fill="#0b36c4" fill-opacity="0.75"/><rect x="657.98" y="375" width="0.96" height="17" fill="#0b36c4" fill-opacity="0.5"/><rect x="658.93" y="375" width="3.16" height="17" fill="#0b36c4" fill-opacity="0.85"/><rect x="664.96" y="375" width="3.06" height="17" fill="#0b36c4" fill-opacity="0.1"/><rect x="668.98" y="375" width="1.05" height="17" fill="#0b36c4" fill-opacity="0.8"/><rect x="672.90" y="375" width="4.02" height="17" fill="#0b36c4" fill-opacity="0.95"/><rect x="676.92" y="375" width="1.91" height="17" fill="#0b36c4" fill-opacity="0.08"/><rect x="682.94" y="375" width="3.06" height="17" fill="#0b36c4" fill-opacity="0.5"/><rect x="686.96" y="375" width="3.06" height="17" fill="#0b36c4" fill-opacity="0.25"/><rect x="692.89" y="375" width="1.05" height="17" fill="#0b36c4" fill-opacity="0.9"/><rect x="694.90" y="375" width="5.93" height="17" fill="#0b36c4" fill-opacity="0.9"/><rect x="706.86" y="375" width="2.10" height="17" fill="#0b36c4" fill-opacity="0.2"/><rect x="712.98" y="375" width="2.01" height="17" fill="#0b36c4" fill-opacity="0.3"/><rect x="722.83" y="375" width="2.10" height="17" fill="#0b36c4" fill-opacity="0.85"/></svg>
<svg class="abs" style="left:733px;top:378.2px" width="11.6" height="11.6" viewBox="0 0 16 16" fill="none" stroke="#2cdaa2" stroke-linecap="round" stroke-linejoin="round"><path d="M8.2 1.2 A6.7 6.7 0 1 1 4.6 13.6 L1.2 14.8 L2.4 11.6 A6.7 6.7 0 0 1 8.2 1.2 Z" stroke-width="1.7"/><path d="M5.8 4.8 Q5.4 7 7.2 8.8 Q9 10.6 11.2 10.2 L11.4 9 L9.8 8.2 L9 9 Q7.6 8.4 7 7 L7.8 6.2 L7 4.6 Z" fill="#2cdaa2" stroke-width=".8"/></svg>
<div class="abs" style="left:373px;top:402px;width:955px;height:36px;background:#f3f6fa;border-bottom:1px solid #e7ebef"></div>
<svg class="abs" style="left:401px;top:414px" width="18" height="17" viewBox="0 0 18 17" fill="none"><rect x="1.55" y="1.6" width="15.3" height="12.5" stroke="#4b5a7c" stroke-width="1.25"/><path d="M7.2 14.5 L9.2 16.3 L11.2 14.5 Z" fill="#4b5a7c"/><path d="M4.9 5.2 H13.4 M4.9 7.8 H13.4 M4.9 10.4 H11" stroke="#4b5a7c" stroke-width="1.35" stroke-opacity=".8"/></svg>
<span class="tx " style="left:452.8px;top:410.3px;font-size:14.5px;color:#2a55c7;letter-spacing:0.01px;">Erik</span>
<span class="tx " style="left:764px;top:410.3px;font-size:14.5px;color:#2a55c7;letter-spacing:-0.17px;">Grosir Gamis Zeyaa</span>
<span class="tx " style="left:994.4px;top:410.3px;font-size:14.5px;color:#2a55c7;letter-spacing:-0.17px;">Lengkap</span>
<span class="tx " style="left:1148.8px;top:410.3px;font-size:14.5px;color:#2a55c7;letter-spacing:-0.04px;">Sudah Dibayar</span>
<svg class="abs" style="left:0;top:0" width="1359" height="767" viewBox="0 0 1359 767" shape-rendering="crispEdges"><rect x="624.97" y="411" width="2.97" height="18" fill="#0b36c4" fill-opacity="0.35"/><rect x="630.04" y="411" width="0.96" height="18" fill="#0b36c4" fill-opacity="0.4"/><rect x="631.00" y="411" width="1.91" height="18" fill="#0b36c4" fill-opacity="0.08"/><rect x="635.98" y="411" width="2.20" height="18" fill="#0b36c4" fill-opacity="0.85"/><rect x="641.04" y="411" width="1.91" height="18" fill="#0b36c4" fill-opacity="0.5"/><rect x="642.96" y="411" width="3.06" height="18" fill="#0b36c4" fill-opacity="0.6"/><rect x="648.98" y="411" width="1.91" height="18" fill="#0b36c4" fill-opacity="1"/><rect x="653.96" y="411" width="2.01" height="18" fill="#0b36c4" fill-opacity="0.85"/><rect x="656.83" y="411" width="1.91" height="18" fill="#0b36c4" fill-opacity="0.06"/><rect x="659.99" y="411" width="4.02" height="18" fill="#0b36c4" fill-opacity="0.6"/><rect x="664.96" y="411" width="4.30" height="18" fill="#0b36c4" fill-opacity="0.9"/><rect x="669.26" y="411" width="2.87" height="18" fill="#0b36c4" fill-opacity="0.12"/><rect x="672.13" y="411" width="2.87" height="18" fill="#0b36c4" fill-opacity="0.25"/><rect x="676.92" y="411" width="1.15" height="18" fill="#0b36c4" fill-opacity="0.8"/><rect x="682.94" y="411" width="1.91" height="18" fill="#0b36c4" fill-opacity="0.06"/><rect x="684.86" y="411" width="1.15" height="18" fill="#0b36c4" fill-opacity="0.75"/><rect x="690.98" y="411" width="2.01" height="18" fill="#0b36c4" fill-opacity="0.9"/><rect x="698.92" y="411" width="2.10" height="18" fill="#0b36c4" fill-opacity="0.85"/><rect x="706.09" y="411" width="1.91" height="18" fill="#0b36c4" fill-opacity="0.12"/><rect x="708.01" y="411" width="0.96" height="18" fill="#0b36c4" fill-opacity="0.3"/><rect x="714.03" y="411" width="2.10" height="18" fill="#0b36c4" fill-opacity="0.15"/><rect x="716.14" y="411" width="0.96" height="18" fill="#0b36c4" fill-opacity="0.3"/><rect x="719.01" y="411" width="1.91" height="18" fill="#fff" fill-opacity="1"/></svg>
<svg class="abs" style="left:725px;top:414.2px" width="11.6" height="11.6" viewBox="0 0 16 16" fill="none" stroke="#2cdaa2" stroke-linecap="round" stroke-linejoin="round"><path d="M8.2 1.2 A6.7 6.7 0 1 1 4.6 13.6 L1.2 14.8 L2.4 11.6 A6.7 6.7 0 0 1 8.2 1.2 Z" stroke-width="1.7"/><path d="M5.8 4.8 Q5.4 7 7.2 8.8 Q9 10.6 11.2 10.2 L11.4 9 L9.8 8.2 L9 9 Q7.6 8.4 7 7 L7.8 6.2 L7 4.6 Z" fill="#2cdaa2" stroke-width=".8"/></svg>
<div class="abs" style="left:373px;top:438px;width:955px;height:36px;border-bottom:1px solid #e7ebef"></div>
<svg class="abs" style="left:401px;top:450px" width="18" height="17" viewBox="0 0 18 17" fill="none"><rect x="1.55" y="1.6" width="15.3" height="12.5" stroke="#4b5a7c" stroke-width="1.25"/><path d="M7.2 14.5 L9.2 16.3 L11.2 14.5 Z" fill="#4b5a7c"/><path d="M4.9 5.2 H13.4 M4.9 7.8 H13.4 M4.9 10.4 H11" stroke="#4b5a7c" stroke-width="1.35" stroke-opacity=".8"/></svg>
<span class="tx " style="left:452.8px;top:446.3px;font-size:14.5px;color:#2a55c7;letter-spacing:-0.74px;">Sasi</span>
<span class="tx " style="left:764px;top:446.3px;font-size:14.5px;color:#2a55c7;letter-spacing:-0.17px;">Grosir Gamis Zeyaa</span>
<span class="tx " style="left:994.4px;top:446.3px;font-size:14.5px;color:#2a55c7;letter-spacing:0.18px;">Menunggu</span>
<span class="tx " style="left:1148.8px;top:446.3px;font-size:14.5px;color:#2a55c7;letter-spacing:0.11px;">Belum Dibayar</span>
<svg class="abs" style="left:0;top:0" width="1359" height="767" viewBox="0 0 1359 767" shape-rendering="crispEdges"><rect x="625.93" y="450" width="2.01" height="14" fill="#0b36c4" fill-opacity="0.95"/><rect x="629.09" y="450" width="1.24" height="14" fill="#0b36c4" fill-opacity="0.35"/><rect x="630.33" y="450" width="1.63" height="14" fill="#0b36c4" fill-opacity="0.5"/><rect x="637.03" y="450" width="1.91" height="14" fill="#0b36c4" fill-opacity="0.85"/><rect x="642.00" y="450" width="1.91" height="14" fill="#0b36c4" fill-opacity="0.35"/><rect x="643.91" y="450" width="0.96" height="14" fill="#0b36c4" fill-opacity="0.25"/><rect x="644.87" y="450" width="1.15" height="14" fill="#0b36c4" fill-opacity="0.45"/><rect x="646.02" y="450" width="1.91" height="14" fill="#0b36c4" fill-opacity="0.2"/><rect x="653.96" y="450" width="2.01" height="14" fill="#0b36c4" fill-opacity="0.85"/><rect x="657.02" y="450" width="2.20" height="14" fill="#0b36c4" fill-opacity="1"/><rect x="662.09" y="450" width="1.91" height="14" fill="#0b36c4" fill-opacity="0.35"/><rect x="666.87" y="450" width="2.10" height="14" fill="#0b36c4" fill-opacity="0.03"/><rect x="669.93" y="450" width="1.05" height="14" fill="#0b36c4" fill-opacity="0.75"/><rect x="674.05" y="450" width="3.06" height="14" fill="#0b36c4" fill-opacity="0.95"/><rect x="677.11" y="450" width="1.91" height="14" fill="#0b36c4" fill-opacity="0.5"/><rect x="679.02" y="450" width="1.91" height="14" fill="#0b36c4" fill-opacity="0.7"/><rect x="681.99" y="450" width="1.91" height="14" fill="#0b36c4" fill-opacity="0.95"/><rect x="685.05" y="450" width="1.91" height="14" fill="#0b36c4" fill-opacity="0.45"/><rect x="686.96" y="450" width="0.96" height="14" fill="#0b36c4" fill-opacity="0.65"/><rect x="690.02" y="450" width="0.96" height="14" fill="#0b36c4" fill-opacity="0.7"/><rect x="692.99" y="450" width="3.06" height="14" fill="#0b36c4" fill-opacity="0.12"/><rect x="698.92" y="450" width="1.91" height="14" fill="#0b36c4" fill-opacity="0.06"/><rect x="701.02" y="450" width="0.96" height="14" fill="#0b36c4" fill-opacity="0.75"/><rect x="709.92" y="450" width="2.10" height="14" fill="#0b36c4" fill-opacity="0.8"/><rect x="715.95" y="450" width="2.10" height="14" fill="#0b36c4" fill-opacity="0.8"/></svg>
<svg class="abs" style="left:725px;top:450.2px" width="11.6" height="11.6" viewBox="0 0 16 16" fill="none" stroke="#2cdaa2" stroke-linecap="round" stroke-linejoin="round"><path d="M8.2 1.2 A6.7 6.7 0 1 1 4.6 13.6 L1.2 14.8 L2.4 11.6 A6.7 6.7 0 0 1 8.2 1.2 Z" stroke-width="1.7"/><path d="M5.8 4.8 Q5.4 7 7.2 8.8 Q9 10.6 11.2 10.2 L11.4 9 L9.8 8.2 L9 9 Q7.6 8.4 7 7 L7.8 6.2 L7 4.6 Z" fill="#2cdaa2" stroke-width=".8"/></svg>
<div class="abs" style="left:373px;top:474px;width:955px;height:36px;background:#f3f6fa;border-bottom:1px solid #e7ebef"></div>
<svg class="abs" style="left:401px;top:486px" width="18" height="17" viewBox="0 0 18 17" fill="none"><rect x="1.55" y="1.6" width="15.3" height="12.5" stroke="#4b5a7c" stroke-width="1.25"/><path d="M7.2 14.5 L9.2 16.3 L11.2 14.5 Z" fill="#4b5a7c"/><path d="M4.9 5.2 H13.4 M4.9 7.8 H13.4 M4.9 10.4 H11" stroke="#4b5a7c" stroke-width="1.35" stroke-opacity=".8"/></svg>
<span class="tx " style="left:452.8px;top:482.3px;font-size:14.5px;color:#2a55c7;letter-spacing:-0.43px;">Jasmine</span>
<span class="tx " style="left:764px;top:482.3px;font-size:14.5px;color:#2a55c7;letter-spacing:-0.17px;">Grosir Gamis Zeyaa</span>
<span class="tx " style="left:994.4px;top:482.3px;font-size:14.5px;color:#2a55c7;letter-spacing:0.18px;">Menunggu</span>
<span class="tx " style="left:1148.8px;top:482.3px;font-size:14.5px;color:#2a55c7;letter-spacing:0.11px;">Belum Dibayar</span>
<svg class="abs" style="left:0;top:0" width="1359" height="767" viewBox="0 0 1359 767" shape-rendering="crispEdges"><rect x="625.93" y="480" width="6.03" height="22" fill="#0b36c4" fill-opacity="0.8"/><rect x="637.98" y="480" width="2.10" height="22" fill="#0b36c4" fill-opacity="0.9"/><rect x="642.00" y="480" width="1.91" height="22" fill="#0b36c4" fill-opacity="0.06"/><rect x="643.91" y="480" width="2.10" height="22" fill="#0b36c4" fill-opacity="0.95"/><rect x="646.02" y="480" width="1.91" height="22" fill="#0b36c4" fill-opacity="0.25"/><rect x="649.94" y="480" width="1.91" height="22" fill="#0b36c4" fill-opacity="0.06"/><rect x="651.85" y="480" width="2.10" height="22" fill="#0b36c4" fill-opacity="1"/><rect x="653.96" y="480" width="2.01" height="22" fill="#0b36c4" fill-opacity="0.25"/><rect x="657.98" y="480" width="6.03" height="22" fill="#0b36c4" fill-opacity="0.8"/><rect x="665.92" y="480" width="4.11" height="22" fill="#0b36c4" fill-opacity="0.95"/><rect x="670.03" y="480" width="1.91" height="22" fill="#0b36c4" fill-opacity="0.55"/><rect x="674.05" y="480" width="1.91" height="22" fill="#0b36c4" fill-opacity="0.95"/><rect x="679.02" y="480" width="1.91" height="22" fill="#0b36c4" fill-opacity="0.55"/><rect x="682.94" y="480" width="5.93" height="22" fill="#0b36c4" fill-opacity="0.8"/><rect x="694.90" y="480" width="2.10" height="22" fill="#0b36c4" fill-opacity="0.9"/><rect x="698.92" y="480" width="1.91" height="22" fill="#0b36c4" fill-opacity="0.05"/><rect x="701.02" y="480" width="2.01" height="22" fill="#0b36c4" fill-opacity="1"/><rect x="703.03" y="480" width="1.91" height="22" fill="#0b36c4" fill-opacity="0.25"/><rect x="706.86" y="480" width="4.02" height="22" fill="#0b36c4" fill-opacity="0.95"/><rect x="710.88" y="480" width="1.91" height="22" fill="#0b36c4" fill-opacity="0.55"/><rect x="714.99" y="480" width="3.06" height="22" fill="#0b36c4" fill-opacity="0.22"/><rect x="719.01" y="480" width="1.91" height="22" fill="#0b36c4" fill-opacity="0.8"/><rect x="726.95" y="480" width="2.10" height="22" fill="#0b36c4" fill-opacity="0.55"/></svg>
<svg class="abs" style="left:733px;top:486.2px" width="11.6" height="11.6" viewBox="0 0 16 16" fill="none" stroke="#2cdaa2" stroke-linecap="round" stroke-linejoin="round"><path d="M8.2 1.2 A6.7 6.7 0 1 1 4.6 13.6 L1.2 14.8 L2.4 11.6 A6.7 6.7 0 0 1 8.2 1.2 Z" stroke-width="1.7"/><path d="M5.8 4.8 Q5.4 7 7.2 8.8 Q9 10.6 11.2 10.2 L11.4 9 L9.8 8.2 L9 9 Q7.6 8.4 7 7 L7.8 6.2 L7 4.6 Z" fill="#2cdaa2" stroke-width=".8"/></svg>
<div class="abs" style="left:373px;top:676px;width:955px;height:10.5px;background:#e2e6ee"></div>
<div class="abs" style="left:384.4px;top:678px;width:594.4px;height:6.8px;background:#c6ccd7"></div>
<svg class="abs" style="left:376.6px;top:678.6px" width="4" height="6" viewBox="0 0 4 6"><path d="M4 0 L0 3 L4 6 Z" fill="#c3c8d2"/></svg>
<svg class="abs" style="left:1320.4px;top:678.6px" width="4" height="6" viewBox="0 0 4 6"><path d="M0 0 L4 3 L0 6 Z" fill="#c3c8d2"/></svg>
<svg class="abs" style="left:378.6px;top:709.4px" width="13" height="14" viewBox="0 0 13 14" fill="none" stroke="#5b57f2" stroke-width="1.25" stroke-linecap="round" stroke-linejoin="round"><path d="M7.2 1 L1.2 7 L7.2 13"/><path d="M12 1 L6 7 L12 13"/></svg>
<svg class="abs" style="left:408.4px;top:709.4px" width="9" height="14" viewBox="0 0 9 14" fill="none" stroke="#5b57f2" stroke-width="1.25" stroke-linecap="round" stroke-linejoin="round"><path d="M7.2 1 L1.2 7 L7.2 13"/></svg>
<span class="tx " style="left:432.4px;top:707.6px;font-size:15px;color:#5c5c5c;letter-spacing:0.76px;">Halaman</span>
<div class="box" style="left:501px;top:702px;width:56px;height:33px"></div>
<span class="tx " style="left:525.6px;top:707.6px;font-size:15px;color:#5c5c5c;letter-spacing:-2.34px;">1</span>
<span class="tx " style="left:561.2px;top:707.6px;font-size:15px;color:#5c5c5c;letter-spacing:-1.04px;">/ 1</span>
<svg class="abs" style="left:590.6px;top:709.4px" width="9" height="14" viewBox="0 0 9 14" fill="none" stroke="#5b57f2" stroke-width="1.25" stroke-linecap="round" stroke-linejoin="round"><path d="M1.2 1 L7.2 7 L1.2 13"/></svg>
<svg class="abs" style="left:615.8px;top:709.4px" width="13" height="14" viewBox="0 0 13 14" fill="none" stroke="#5b57f2" stroke-width="1.25" stroke-linecap="round" stroke-linejoin="round"><path d="M1.2 1 L7.2 7 L1.2 13"/><path d="M6 1 L12 7 L6 13"/></svg>
<svg class="abs" style="left:655.6px;top:707.9px" width="16" height="16" viewBox="0 0 16 16" fill="none" stroke-linecap="round" stroke-linejoin="round"><path d="M1.7 6.1 A6.6 6.6 0 0 1 13.9 4.9" stroke="#2e9e6a" stroke-width="1.4"/><path d="M14.4 1.9 V5.7 H10.6" stroke="#2e9e6a" stroke-width="1.4"/><path d="M14.3 9.9 A6.6 6.6 0 0 1 2.1 11.1" stroke="#2e9e6a" stroke-width="1.4"/><path d="M1.6 14.1 V10.3 H5.4" stroke="#2e9e6a" stroke-width="1.4"/></svg>
<span class="tx " style="left:1160.6px;top:707.6px;font-size:15px;color:#5c5c5c;letter-spacing:0.08px;">1 - 6 dari 6</span>
<div class="box" style="left:1244px;top:701px;width:84px;height:35px"></div>
<span class="tx " style="left:1259.4px;top:707.6px;font-size:15px;color:#444;letter-spacing:-0.29px;">20</span>
<svg class="abs" style="left:1313px;top:715px" width="10" height="7" viewBox="0 0 10 7" fill="none" stroke="#3a3a3a" stroke-width="1.9" stroke-linecap="round" stroke-linejoin="round"><path d="M1.2 1.2 L5 5 L8.8 1.2"/></svg>
</div>
</body>
</html>
